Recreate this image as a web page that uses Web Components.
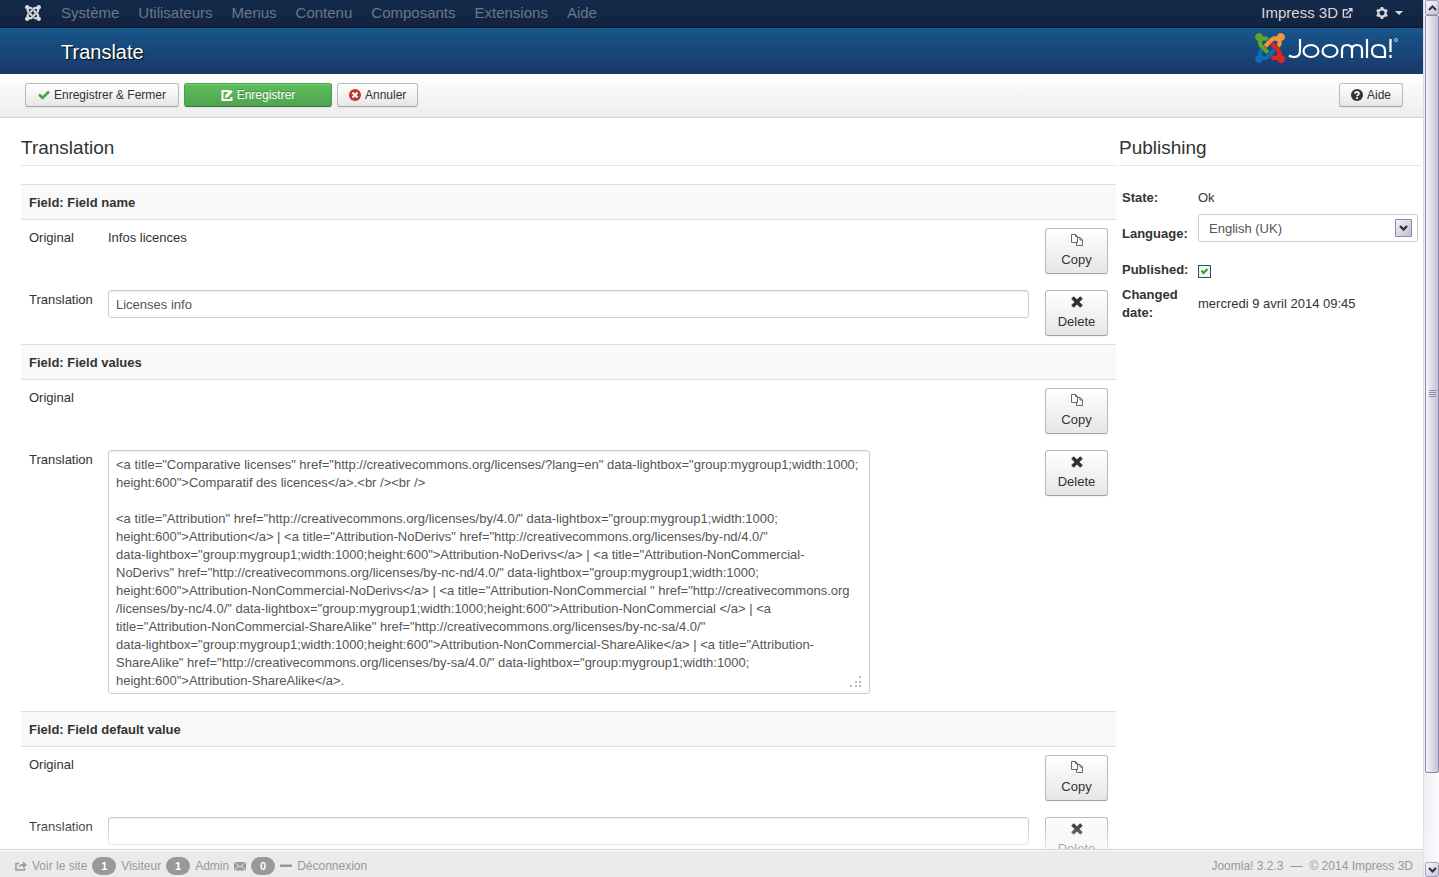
<!DOCTYPE html>
<html lang="fr">
<head>
<meta charset="utf-8">
<title>Translate</title>
<style>
body { margin: 0; font: 13px/18px "Liberation Sans", Arial, sans-serif; color: #333; background: #fff; }
</style>
</head>
<body>
<admin-app></admin-app>
<script>
const icons = {
  check: '<path d="M1 5.500 4.500 9 11 2.500" fill="none" stroke="currentColor" stroke-width="2.600"/>',
  edit: '<path d="M8 2H1.500v9h9V8" fill="none" stroke="currentColor" stroke-width="2"/><path d="M4 9V6.500L9.700.800l2 2L6.500 8.500z" fill="currentColor"/>',
  cancel: '<circle cx="6" cy="6" r="6" fill="currentColor"/><path d="m3.500 3.500 5 5m0-5-5 5" stroke="#fff" stroke-width="2"/>',
  help: '<circle cx="6" cy="6" r="6" fill="currentColor"/><path d="M4 4.700C4 2.300 8 2.300 8 4.600 8 6 6 6 6 7.300" fill="none" stroke="#fff" stroke-width="1.700"/><path d="M5.100 8.300h1.800V10H5.100z" fill="#fff"/>',
  out: '<path d="M6 3H1.500v8H9V7" fill="none" stroke="currentColor" stroke-width="1.500"/><path d="m4.500 8 5.500-5.500" stroke="currentColor" stroke-width="1.500"/><path d="M6.500 1H11.500v5z" fill="currentColor"/>',
  share: '<path d="M4 3.500H1V10h8.500V8" fill="none" stroke="currentColor" stroke-width="1.500"/><path d="M3.500 7.500C4 4.500 6 4 8 4V1.500l4 3.500-4 3V6C6 6 4.500 6.300 3.500 7.500z" fill="currentColor"/>',
  mail: '<path d="M0 2h12v8.500H0z" fill="currentColor"/><path d="m.500 2.500 5.500 4.500 5.500-4.500M.500 10.500 4.300 6m7.200 4.500L7.700 6" fill="none" stroke="#ebebeb"/>',
  minus: '<path d="M0 4.500h12v2.500H0z" fill="currentColor"/>',
  gear: '<path d="M6 2.300a3.700 3.700 0 1 0 0 7.400 3.700 3.700 0 1 0 0-7.400z" fill="none" stroke="currentColor" stroke-width="2.200"/><path d="M6 0v2.500M6 9.500V12M.800 3l2.200 1.300M9 7.700 11.200 9M.800 9 3 7.700M9 4.300 11.200 3" stroke="currentColor" stroke-width="2.600"/>',
  copy: '<path d="M.500.500h4l2 2v6h-6zM6.500 3.500H9l2.500 2.500v5.500h-6v-3M4.500.500v2h2M9 3.500V6h2.500" fill="none" stroke="#444" stroke-width=".8"/>',
  cross: '<path d="m1.500 1.500 9 9m0-9-9 9" stroke="currentColor" stroke-width="3.600"/>'
};

/* Four interlocking arms of the Joomla mark, in a 448-unit box. */
const arms = (green, orange, red, blue) => `
  <path fill="${green}" d="M.6 60.100C.6 26.800 27.400 0 60.400 0c30 0 54.500 21.900 59.200 50.200 32.600-7.600 67.100.6 96.500 30l-44.300 44.300c-20.500-20.500-42.600-16.300-55.400-3.500-14.300 14.300-14.300 37.900 0 52.200l99.500 99.500-44 44.300c-87.700-87.200-49.700-49.700-99.800-99.700-26.800-26.500-35-64.800-24.800-98.900C20.400 112.600.6 88.700.6 60.100z"/>
  <path fill="${orange}" d="M130.100 176.500l44.300 44.300c10-10 89.700-89.700 99.700-99.800 14.300-14.300 37.600-14.300 51.900 0 12.800 12.800 17 35-3.500 55.400l44 44.300c31.200-31.200 38.500-67.600 28.900-101.200 29.200-4.100 51.900-29.200 51.900-59.500 0-33.200-26.800-60.100-59.800-60.100-30.300 0-55.400 22.500-59.500 51.600-33.800-9.900-71.700-1.500-98.300 25.100-18.300 19.100-71.100 71.500-99.600 99.900z"/>
  <path fill="${red}" d="M396.400 328.700c8.200-32.700-.9-68.500-26.300-93.900-11.800-12.200 5 4.700-99.500-99.700l-44.300 44.300 99.700 99.700c14.300 14.300 14.300 37.600 0 51.900-12.800 12.800-35 17-55.400-3.500l-44 44.300c27.600 30.200 68 38.800 102.700 28 5.500 27.400 29.700 48.100 58.900 48.100 33 0 59.800-26.800 59.800-60.100 0-30.200-22.500-55-51.600-59.100z"/>
  <path fill="${blue}" d="M312.100 275.600l-44-44.300c-87 86.400-50.400 50.400-99.700 99.800-14.300 14.300-37.600 14.300-51.900 0-13.100-13.400-16.900-35.300 3.200-55.400l-44-44.300c-30.200 30.200-38 65.200-29.500 98.300-26.700 6-46.200 29.900-46.200 58.200C0 421.200 26.800 448 59.800 448c28.600 0 52.500-19.800 58.600-46.700 32.700 8.200 68.500-.6 94.200-26 32.100-32 12.200-12.400 99.500-99.700z"/>`;

function define(name, render, after) {
  customElements.define(name, class extends HTMLElement {
    constructor() { super(); this.attachShadow({ mode: 'open' }); }
    connectedCallback() {
      this.shadowRoot.innerHTML = render(this);
      if (after) after(this.shadowRoot, this);
    }
  });
}

define('ui-icon', el => `
  <style>:host { display: inline-flex; flex: none; } svg { display: block; overflow: visible; }</style>
  <svg width="${el.getAttribute('size') || 12}" height="${el.getAttribute('size') || 12}" viewBox="0 0 12 12" aria-hidden="true">${icons[el.getAttribute('name')]}</svg>`);

define('top-nav', () => `
  <style>
    :host { display: block; background: linear-gradient(#13294a, #142849 30%, #10223e); border-bottom: 1px solid #0b182b; }
    nav { display: flex; align-items: center; gap: 19px; box-sizing: border-box; height: 27px; padding: 0 20px 2px 25px; font-size: 15px; }
    a { color: #6b7689; text-decoration: none; display: flex; align-items: center; }
    .home { width: 17px; }
    .site { margin-left: auto; color: #d9d9d9; gap: 4px; }
    button { border: 0; background: none; padding: 0; color: #d9d9d9; display: flex; align-items: center; gap: 7px; margin-left: 4px; height: 24px; }
    .caret { border: 4px solid transparent; border-top-color: currentColor; border-bottom: 0; }
  </style>
  <nav>
    <a class="home" href="#" aria-label="Joomla"><svg width="16" height="16" viewBox="0 0 448 448">${arms('#d9d9d9', '#d9d9d9', '#d9d9d9', '#d9d9d9')}</svg></a>
    <a href="#">Système</a><a href="#">Utilisateurs</a><a href="#">Menus</a><a href="#">Contenu</a><a href="#">Composants</a><a href="#">Extensions</a><a href="#">Aide</a>
    <a class="site" href="#">Impress 3D <ui-icon name="out" size="11"></ui-icon></a>
    <button type="button" aria-label="Options"><ui-icon name="gear"></ui-icon><span class="caret"></span></button>
  </nav>`);

define('page-header', () => `
  <style>
    :host { display: flex; align-items: center; justify-content: space-between; height: 46px; padding: 0 24px 0 61px; background: linear-gradient(#17568c, #1a3867); }
    h1 { margin: 0; padding-top: 2px; font-size: 20px; line-height: 44px; font-weight: normal; color: #fff; text-shadow: 1px 1px 1px #000; }
    svg { display: block; margin-bottom: 6px; }
  </style>
  <h1>Translate</h1>
  <svg width="144" height="30" viewBox="0 0 144 30" role="img" aria-label="Joomla!">
    <svg width="30" height="30" viewBox="0 0 448 448">${arms('#5ba32b', '#f9943b', '#e52424', '#0f6cb0')}</svg>
    <g fill="none" stroke="#fff" stroke-width="2.200">
      <path d="M45 6v12q0 6-6 6-3 0-5-1.500"/><ellipse cx="56" cy="18" rx="7.500" ry="6"/><ellipse cx="75" cy="18" rx="7.500" ry="6"/>
      <path d="M87 25v-8q0-5 5-5t5 5v8M97 17q0-5 5-5t5 5v8M112 6v19"/><path d="M130 25v-7q0-6-6.500-6t-6.500 6 6.500 6h6.500M135.500 6v13M135.500 22v3"/>
    </g>
    <circle cx="141" cy="7" r="1.500" fill="none" stroke="#fff" stroke-width=".7"/>
  </svg>`);

define('ui-button', el => `
  <style>
    :host { display: block; }
    button { display: flex; align-items: center; justify-content: center; gap: 4px; box-sizing: border-box; width: 100%; height: 24px; margin: 0; padding: 0 11px;
      font: 12px/18px "Liberation Sans", Arial, sans-serif; color: #333; border: 1px solid #bbb; border-bottom-color: #a2a2a2; border-radius: 3px;
      background: linear-gradient(#fff, #e6e6e6); box-shadow: inset 0 1px 0 rgba(255,255,255,.2), 0 1px 2px rgba(0,0,0,.05); }
    .text { padding-top: 1px; line-height: 17px; }
    :host([kind=success]) { width: 148px; }
    :host([kind=success]) button { color: #fff; background: linear-gradient(#5bbf5b, #51a351); border-color: #46a546 #46a546 #387038; text-shadow: 0 -1px 0 rgba(0,0,0,.25); }
    :host([kind=stacked]) button { flex-direction: column; gap: 4px; height: 46px; padding: 0; font-size: 13px; }
    .tint { color: var(--tint, inherit); }
  </style>
  <button type="button"><ui-icon class="tint" name="${el.getAttribute('icon')}"></ui-icon><span class="text"><slot></slot></span></button>`);

define('tool-bar', () => `
  <style>
    :host { display: flex; gap: 5px; padding: 9px 20px 10px 25px; background: linear-gradient(#fff, #ededed); border-bottom: 1px solid #d0d0d0; }
    .save { --tint: #46a546; min-width: 154px; } .cancel { --tint: #bd362f; } .help { margin-left: auto; }
  </style>
  <ui-button class="save" icon="check">Enregistrer &amp; Fermer</ui-button>
  <ui-button kind="success" icon="edit">Enregistrer</ui-button>
  <ui-button class="cancel" icon="cancel">Annuler</ui-button>
  <ui-button class="help" icon="help">Aide</ui-button>`);

define('panel-section', el => `
  <style>
    :host { display: block; }
    h2 { margin: 0 0 18px; padding-top: 2px; font-size: 19px; line-height: 34px; font-weight: normal; border-bottom: 1px solid #e5e5e5; }
  </style>
  <section><h2>${el.getAttribute('heading')}</h2><slot></slot></section>`);

const sample = `<a title="Comparative licenses" href="http://creativecommons.org/licenses/?lang=en" data-lightbox="group:mygroup1;width:1000;
height:600">Comparatif des licences</a>.<br /><br />

<a title="Attribution" href="http://creativecommons.org/licenses/by/4.0/" data-lightbox="group:mygroup1;width:1000;
height:600">Attribution</a> | <a title="Attribution-NoDerivs" href="http://creativecommons.org/licenses/by-nd/4.0/"
data-lightbox="group:mygroup1;width:1000;height:600">Attribution-NoDerivs</a> | <a title="Attribution-NonCommercial-
NoDerivs" href="http://creativecommons.org/licenses/by-nc-nd/4.0/" data-lightbox="group:mygroup1;width:1000;
height:600">Attribution-NonCommercial-NoDerivs</a> | <a title="Attribution-NonCommercial " href="http://creativecommons.org
/licenses/by-nc/4.0/" data-lightbox="group:mygroup1;width:1000;height:600">Attribution-NonCommercial </a> | <a
title="Attribution-NonCommercial-ShareAlike" href="http://creativecommons.org/licenses/by-nc-sa/4.0/"
data-lightbox="group:mygroup1;width:1000;height:600">Attribution-NonCommercial-ShareAlike</a> | <a title="Attribution-
ShareAlike" href="http://creativecommons.org/licenses/by-sa/4.0/" data-lightbox="group:mygroup1;width:1000;
height:600">Attribution-ShareAlike</a>.`;

define('translation-field', el => {
  const area = el.hasAttribute('multiline');
  return `
  <style>
    :host { display: block; }
    h3 { margin: 0; padding: 9px 8px 7px; font-size: 13px; line-height: 18px; background: #f9f9f9; border-top: 1px solid #ddd; }
    .row { display: grid; grid-template-columns: 71px minmax(0, 1fr) 63px; gap: 8px; padding: 8px; }
    .row > :nth-child(2) { margin-right: 8px; }
    .row > span, label { padding-top: 1px; }
    .first { border-top: 1px solid #ddd; }
    input, textarea { display: block; box-sizing: border-box; width: 100%; height: 28px; margin: 0; padding: 4px 7px; border: 1px solid #ccc; border-radius: 3px; outline: 0;
      font: 13px/18px "Liberation Sans", Arial, sans-serif; color: #555; background: #fff; box-shadow: inset 0 1px 1px rgba(0,0,0,.075); }
    .area { position: relative; max-width: 762px; margin-bottom: 9px; }
    textarea { height: auto; padding: 5px 7px 3px; white-space: pre; overflow: hidden; resize: none; }
    .grip { position: absolute; right: 8px; bottom: 6px; }
  </style>
  <h3>${el.getAttribute('heading')}</h3>
  <div class="row first"><span>Original</span><span><slot></slot></span><ui-button kind="stacked" icon="copy">Copy</ui-button></div>
  <div class="row"><label for="value">Translation</label>
    ${area ? `<div class="area"><textarea id="value" rows="13" spellcheck="false"></textarea>
      <svg class="grip" width="12" height="12" fill="#bbb"><path d="M9 0h2v2H9zM5 5h2v2H5zM9 5h2v2H9zM0 9h2v2H0zM5 9h2v2H5zM9 9h2v2H9z"/></svg></div>`
    : `<div><input id="value" type="text"></div>`}
    <ui-button kind="stacked" icon="cross">Delete</ui-button></div>`;
}, (root, el) => {
  root.getElementById('value').value = el.hasAttribute('multiline') ? sample : (el.getAttribute('value') || '');
});

define('publishing-form', () => `
  <style>
    :host { display: grid; grid-template-columns: 68px minmax(0, 1fr); gap: 7px 8px; align-items: center; padding: 5px 3px 0; }
    label, .label { font-weight: bold; }
    .select { position: relative; padding-bottom: 12px; }
    select { appearance: none; display: block; box-sizing: border-box; width: 100%; height: 28px; margin: 0; padding: 1px 10px 0; border: 1px solid #ccc; border-radius: 3px; background: #fff;
      font: 13px/18px "Liberation Sans", Arial, sans-serif; color: #555; }
    .select svg { position: absolute; right: 6px; top: 5px; pointer-events: none; }
    input { appearance: none; display: block; box-sizing: border-box; width: 13px; height: 13px; margin: 2px 0 0; border: 1px solid #1c5180; background: #fff; }
    input:checked { background: #f4f4f1 url("data:image/svg+xml,%3Csvg xmlns='http://www.w3.org/2000/svg' viewBox='0 0 11 11'%3E%3Cpath d='M2.500 4.500 4.500 7 8.500 3' fill='none' stroke='%2321a121' stroke-width='2'/%3E%3C/svg%3E"); }
  </style>
  <span class="label">State:</span><span>Ok</span>
  <label for="lang">Language:</label>
  <div class="select"><select id="lang"><option>English (UK)</option></select>
    <svg width="17" height="18"><defs><linearGradient id="g" x2="1" y2="1"><stop stop-color="#f4f4fa"/><stop offset="1" stop-color="#bcbcd2"/></linearGradient></defs><path d="M.500.500h16v17H.500z" fill="url(#g)" stroke="#8a8aa6"/><path d="m5 7 3.500 3.500L12 7" fill="none" stroke="#333" stroke-width="2.400"/></svg></div>
  <label for="pub">Published:</label><span><input id="pub" type="checkbox" checked></span>
  <span class="label">Changed date:</span><span>mercredi 9 avril 2014 09:45</span>`);

define('status-bar', () => `
  <style>
    :host { display: flex; align-items: center; justify-content: space-between; box-sizing: border-box; height: 28px; padding: 5px 10px 0 15px; position: relative;
      background: #ebebeb; border-top: 1px solid #d4d4d4; color: #999; font-size: 12px; box-shadow: inset 0 1px 0 rgba(255,255,255,.8), 0 -15px 15px rgba(255,255,255,.6); }
    div { display: flex; align-items: center; gap: 5px; }
    .legal { gap: 7px; }
    a { display: flex; align-items: center; gap: 5px; color: inherit; text-decoration: none; }
    b { width: 24px; border-radius: 9px; background: #999; color: #fff; font-size: 11px; line-height: 18px; text-align: center; }
  </style>
  <div><a href="#"><ui-icon name="share"></ui-icon>Voir le site</a><b>1</b><span>Visiteur</span><b>1</b><span>Admin</span><ui-icon name="mail"></ui-icon><b>0</b><a href="#"><ui-icon name="minus"></ui-icon>Déconnexion</a></div>
  <div class="legal"><span>Joomla! 3.2.3</span><span>—</span><span>© 2014 Impress 3D</span></div>`);

define('scroll-rail', () => `
  <style>
    :host { display: flex; flex-direction: column; box-sizing: border-box; border-left: 1px solid #dcdce6; padding-left: 1px; background: linear-gradient(90deg, #eeeef4, #fdfdff); }
    button { height: 15px; padding: 0; border: 1px solid #a2a2ba; border-radius: 2px; background: linear-gradient(135deg, #fafafd, #c4c4d8); display: flex; align-items: center; justify-content: center; }
    .track { flex: 1; display: flex; flex-direction: column; }
    .rest { flex: 2; }
    .thumb { flex: 17; border: 1px solid #8c8ca8; border-radius: 2px; background: linear-gradient(90deg, #f6f6fa, #dcdce8 50%, #c2c2d8); display: flex; align-items: center; justify-content: center; }
  </style>
  <button type="button" aria-label="Haut"><svg width="9" height="6"><path d="M1 5l3.500-3.500L8 5" fill="none" stroke="#333" stroke-width="2"/></svg></button>
  <div class="track"><div class="thumb"><svg width="7" height="8"><path d="M0 .500h7M0 2.500h7M0 4.500h7M0 6.500h7" stroke="#8e8ea8"/></svg></div><div class="rest"></div></div>
  <button type="button" aria-label="Bas"><svg width="9" height="6"><path d="M1 1l3.500 3.500L8 1" fill="none" stroke="#333" stroke-width="2"/></svg></button>`);

define('admin-app', () => `
  <style>
    :host { display: grid; grid-template-columns: minmax(0, 1fr) 16px; height: 100vh; }
    .page { display: flex; flex-direction: column; min-height: 0; }
    .page > * { flex: none; }
    .page > main { flex: 1 1 0; min-height: 0; overflow: hidden; display: grid; align-content: start; grid-template-columns: minmax(0, 1fr) 302px; gap: 3px; padding: 11px 2px 0 21px; }
    status-bar { z-index: 1; }
  </style>
  <div class="page">
    <top-nav></top-nav><page-header></page-header><tool-bar></tool-bar>
    <main>
      <panel-section heading="Translation">
        <translation-field heading="Field: Field name" value="Licenses info">Infos licences</translation-field>
        <translation-field heading="Field: Field values" multiline></translation-field>
        <translation-field heading="Field: Field default value"></translation-field>
      </panel-section>
      <panel-section heading="Publishing"><publishing-form></publishing-form></panel-section>
    </main>
    <status-bar></status-bar>
  </div>
  <scroll-rail></scroll-rail>`);
</script>
</body>
</html>
